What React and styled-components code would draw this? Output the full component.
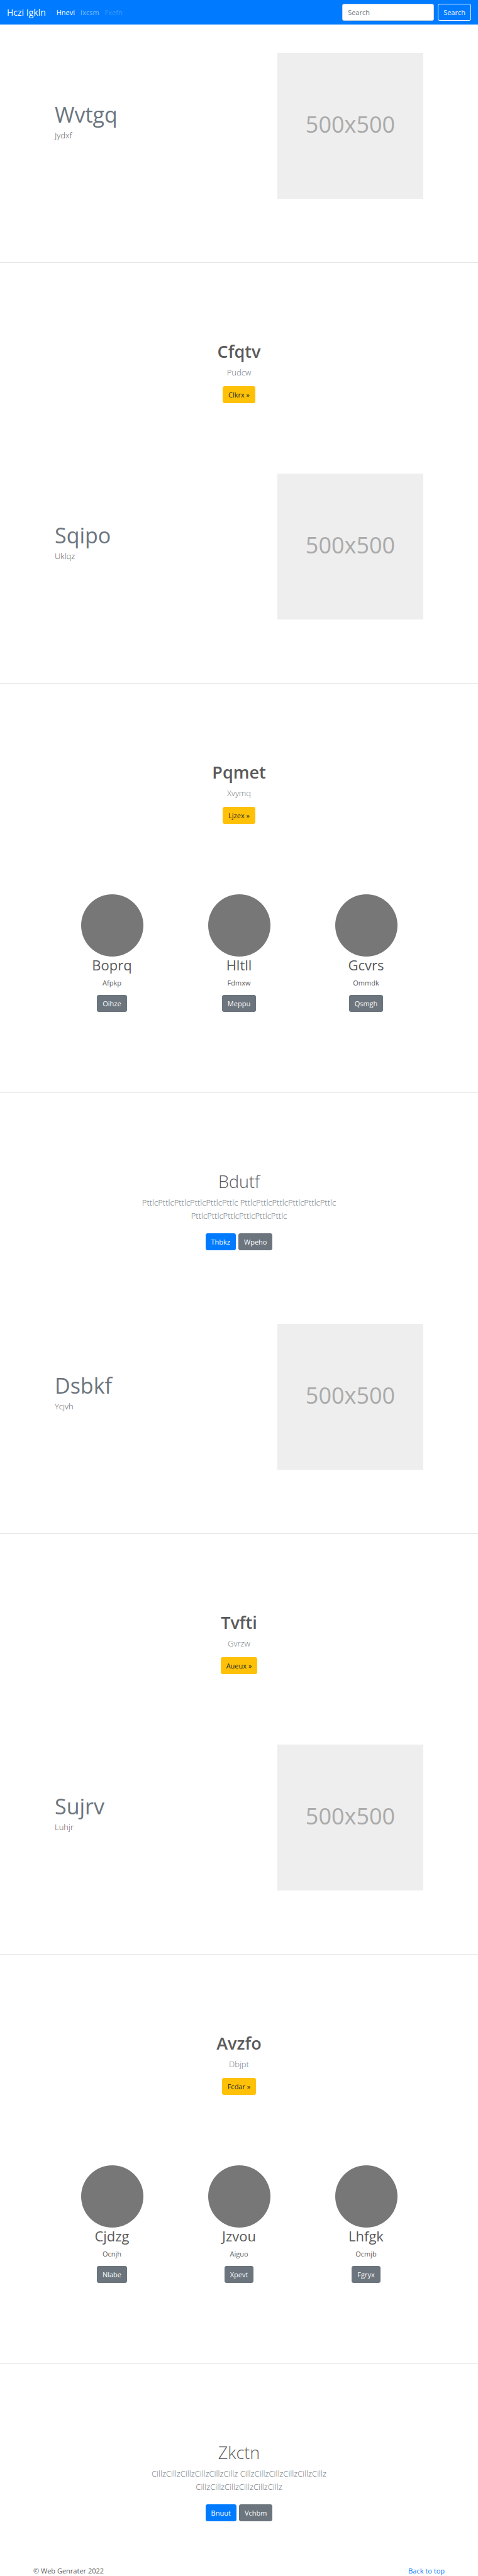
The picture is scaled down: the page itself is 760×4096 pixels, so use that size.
import React from "react";
import styled, { createGlobalStyle, css } from "styled-components";

const GlobalStyle = createGlobalStyle`
  *, *::before, *::after { box-sizing: border-box; }
  body {
    margin: 0;
    background: #fff;
    color: #5a5a5a;
    font-family: "Open Sans", "Noto Sans", sans-serif;
    font-size: 11px;
    line-height: 17px;
  }
  h1, h2, p { margin: 0; }
`;

const NavBar = styled.nav`
  display: flex;
  align-items: center;
  padding: 6px 11px;
  background: #007bff;
`;

const Brand = styled.a`
  margin-right: 17px;
  color: #fff;
  font-size: 14px;
  line-height: 21px;
  text-decoration: none;
`;

const NavList = styled.ul`
  display: flex;
  gap: 9px;
  margin: 0;
  padding: 0;
  list-style: none;
`;

const navTones = {
  active: "#fff",
  normal: "rgba(255, 255, 255, 0.5)",
  disabled: "rgba(255, 255, 255, 0.25)",
};

const NavLink = styled.a`
  color: ${(p) => navTones[p.$tone]};
  text-decoration: none;
`;

const SearchForm = styled.form`
  display: flex;
  gap: 6px;
  margin-left: auto;
`;

const SearchInput = styled.input`
  width: 146px;
  height: 27px;
  padding: 0 8px;
  border: 1px solid #ced4da;
  border-radius: 3px;
  background: #fff;
  color: #495057;
  font: inherit;
  &::placeholder { color: #6c757d; opacity: 1; }
`;

const buttonTones = {
  primary: css`background: #007bff; border-color: #007bff; color: #fff;`,
  secondary: css`background: #6c757d; border-color: #6c757d; color: #fff;`,
  warning: css`background: #ffc107; border-color: #ffc107; color: #212529;`,
  outline: css`background: transparent; border-color: #f8f9fa; color: #f8f9fa;`,
};

const Button = styled.button`
  height: 27px;
  padding: 0 8px;
  border: 1px solid;
  border-radius: 3px;
  font: inherit;
  cursor: pointer;
  ${(p) => buttonTones[p.$tone]}
`;

const Divider = styled.hr`
  height: 1px;
  margin: 0;
  border: 0;
  background: #e6e6e6;
`;

const FeatureRow = styled.section`
  display: flex;
  justify-content: space-between;
  max-width: 586px;
  margin: 0 auto;
  padding: ${(p) => (p.$first ? "45px" : "0")} 0 101px;
`;

const FeatureText = styled.div`
  padding-top: 77px;
`;

const FeatureTitle = styled.h2`
  margin-bottom: 2px;
  color: #6c757d;
  font-size: 34px;
  font-weight: 400;
  line-height: 42px;
`;

const Lead = styled.p`
  font-size: 13px;
  font-weight: 300;
  line-height: 21px;
  color: ${(p) => (p.$muted ? "#6c757d" : "inherit")};
`;

const Placeholder = styled.div`
  display: flex;
  align-items: center;
  justify-content: center;
  width: 232px;
  aspect-ratio: 1;
  padding-bottom: 4px;
  background: #eee;
  color: #aaa;
  font-size: 36px;
  line-height: 50px;
`;

const Centered = styled.section`
  display: flex;
  flex-direction: column;
  align-items: center;
  padding: 124px 11px ${(p) => p.$bottom};
  text-align: center;
`;

const CenteredTitle = styled.h1`
  margin-bottom: 6px;
  font-size: 27px;
  font-weight: ${(p) => (p.$light ? 300 : 600)};
  line-height: 34px;
`;

const Intro = styled(Lead)`
  max-width: 400px;
  margin-bottom: ${(p) => (p.$wide ? "17px" : "11px")};
`;

const Actions = styled.div`
  display: flex;
  gap: 4px;
`;

const Trio = styled.section`
  display: grid;
  grid-template-columns: repeat(3, 1fr);
  max-width: 606px;
  margin: 0 auto;
  padding-bottom: 128px;
`;

const Profile = styled.article`
  display: flex;
  flex-direction: column;
  align-items: center;
  text-align: center;
`;

const Avatar = styled.div`
  width: 99px;
  height: 99px;
  border-radius: 50%;
  background: #777;
`;

const ProfileName = styled.h2`
  margin-bottom: 6px;
  font-size: 22px;
  font-weight: 400;
  line-height: 27px;
`;

const ProfileText = styled.p`
  margin-bottom: 11px;
`;

const Footer = styled.footer`
  display: flex;
  justify-content: space-between;
  padding: 0 53px;
`;

const FooterLink = styled.a`
  color: #007bff;
  text-decoration: none;
`;

function Feature({ title, text, first }) {
  return (
    <FeatureRow $first={first}>
      <FeatureText>
        <FeatureTitle>{title}</FeatureTitle>
        <Lead>{text}</Lead>
      </FeatureText>
      <Placeholder>500x500</Placeholder>
    </FeatureRow>
  );
}

function Hero({ title, text, action }) {
  return (
    <Centered $bottom="112px">
      <CenteredTitle>{title}</CenteredTitle>
      <Intro $muted>{text}</Intro>
      <Button $tone="warning">{action} »</Button>
    </Centered>
  );
}

function Profiles({ people }) {
  return (
    <Trio>
      {people.map(([name, text, action]) => (
        <Profile key={name}>
          <Avatar />
          <ProfileName>{name}</ProfileName>
          <ProfileText>{text}</ProfileText>
          <Button $tone="secondary">{action}</Button>
        </Profile>
      ))}
    </Trio>
  );
}

function Album({ title, word, primary, secondary, bottom }) {
  const chunk = word.repeat(6);
  return (
    <Centered $bottom={bottom}>
      <CenteredTitle $light>{title}</CenteredTitle>
      <Intro $muted $wide>{`${chunk} ${chunk} ${chunk}`}</Intro>
      <Actions>
        <Button $tone="primary">{primary}</Button>
        <Button $tone="secondary">{secondary}</Button>
      </Actions>
    </Centered>
  );
}

export default function App() {
  return (
    <>
      <GlobalStyle />
      <NavBar>
        <Brand href="#">Hczi Igkln</Brand>
        <NavList>
          <li><NavLink href="#" $tone="active">Hnevi</NavLink></li>
          <li><NavLink href="#" $tone="normal">Ixcsm</NavLink></li>
          <li><NavLink href="#" $tone="disabled" aria-disabled="true">Fxefn</NavLink></li>
        </NavList>
        <SearchForm onSubmit={(e) => e.preventDefault()}>
          <SearchInput type="text" placeholder="Search" aria-label="Search" />
          <Button $tone="outline" type="submit">Search</Button>
        </SearchForm>
      </NavBar>
      <main>
        <Feature first title="Wvtgq" text="Jydxf" />
        <Divider />
        <Hero title="Cfqtv" text="Pudcw" action="Clkrx" />
        <Feature title="Sqipo" text="Uklqz" />
        <Divider />
        <Hero title="Pqmet" text="Xvymq" action="Ljzex" />
        <Profiles
          people={[
            ["Boprq", "Afpkp", "Oihze"],
            ["Hltll", "Fdmxw", "Meppu"],
            ["Gcvrs", "Ommdk", "Qsmgh"],
          ]}
        />
        <Divider />
        <Album title="Bdutf" word="Pttlc" primary="Thbkz" secondary="Wpeho" bottom="117px" />
        <Feature title="Dsbkf" text="Ycjvh" />
        <Divider />
        <Hero title="Tvfti" text="Gvrzw" action="Aueux" />
        <Feature title="Sujrv" text="Luhjr" />
        <Divider />
        <Hero title="Avzfo" text="Dbjpt" action="Fcdar" />
        <Profiles
          people={[
            ["Cjdzg", "Ocnjh", "Nlabe"],
            ["Jzvou", "Aiguo", "Xpevt"],
            ["Lhfgk", "Ocmjb", "Fgryx"],
          ]}
        />
        <Divider />
        <Album title="Zkctn" word="Cillz" primary="Bnuut" secondary="Vchbm" bottom="70px" />
      </main>
      <Footer>
        <p>© Web Genrater 2022</p>
        <FooterLink href="#">Back to top</FooterLink>
      </Footer>
    </>
  );
}
